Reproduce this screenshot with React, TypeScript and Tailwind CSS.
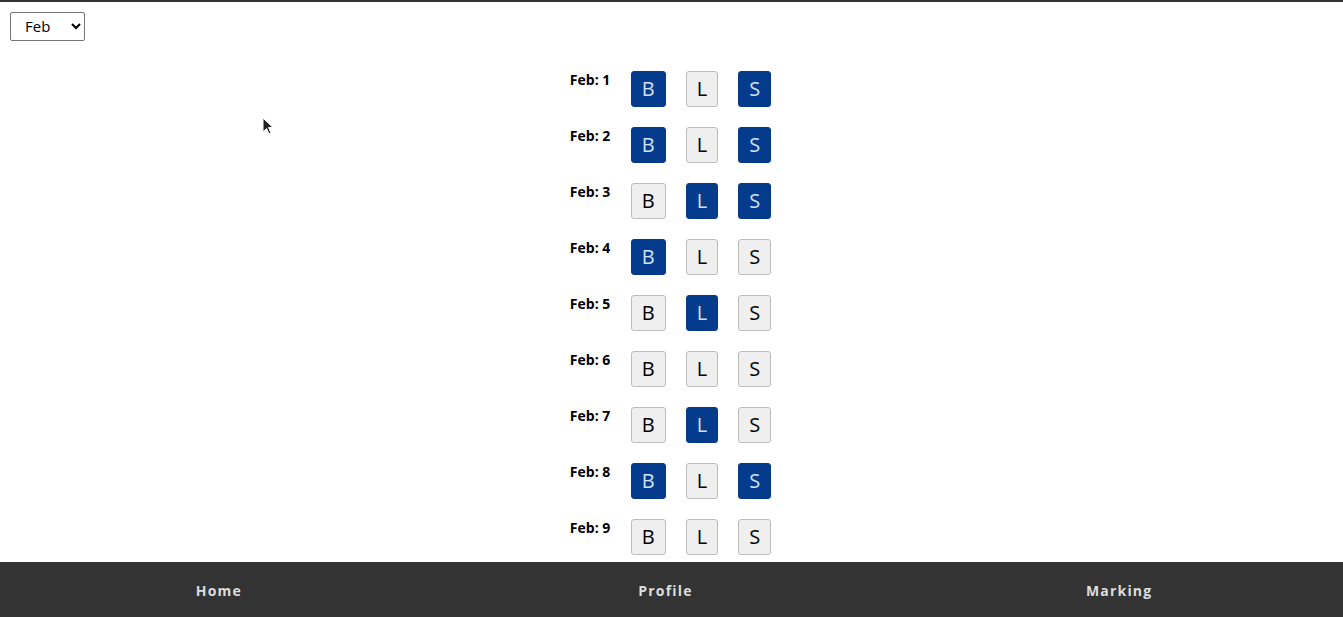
import { useState } from 'react'

const marks: Record<number, string[]> = {
  1: ['B', 'S'],
  2: ['B', 'S'],
  3: ['L', 'S'],
  4: ['B'],
  5: ['L'],
  6: [],
  7: ['L'],
  8: ['B', 'S'],
  9: [],
}

const days = Array.from({ length: 9 }, (_, i) => i + 1)

function MealButton({ letter, active }: { letter: string; active: boolean }) {
  return (
    <button
      className={
        active
          ? 'h-9 px-[10px] rounded-[3px] border border-[#063a88] bg-[#043b8c] text-[#d3e2f6] text-[20px] leading-none'
          : 'h-9 px-[10px] rounded-[3px] border border-[#bdbdbd] bg-[#efefef] text-black text-[20px] leading-none'
      }
    >
      {letter}
    </button>
  )
}

export default function App() {
  const [month, setMonth] = useState('Feb')

  return (
    <div className="h-screen flex flex-col bg-white border-t-2 border-[#333] font-['Open_Sans',sans-serif] relative">
      <div className="flex-1 overflow-hidden">
        <div className="pt-[10px] pl-[10px]">
          <select
            value={month}
            onChange={(e) => setMonth(e.target.value)}
            className="w-[75px] h-[29px] border border-[#767676] rounded-[2px] bg-white text-[15px] pl-[10px] pb-[2px] text-black"
          >
            <option>Jan</option>
            <option>Feb</option>
            <option>Mar</option>
          </select>
        </div>

        <div className="flex flex-col items-center pt-[30px] pr-[2px] gap-5">
          {days.map((d) => (
            <div key={d} className="flex items-start gap-5">
              <span className="text-[14px] font-bold leading-5 mt-[-1px] w-[41px]">
                Feb: {d}
              </span>
              {['B', 'L', 'S'].map((l) => (
                <MealButton key={l} letter={l} active={(marks[d] || []).includes(l)} />
              ))}
            </div>
          ))}
        </div>
      </div>

      <svg className="absolute left-[262px] top-[115px]" width="12" height="19" viewBox="0 0 12 19">
        <path d="M1 1 L1 15 L4.5 11.5 L7 17 L9 16 L6.5 10.5 L11 10.5 Z" fill="#222" stroke="#fff" strokeWidth="1" />
      </svg>

      <nav className="h-[55px] shrink-0 bg-[#333] grid grid-cols-3 items-center text-center pt-[2px]">
        <span className="text-[14px] font-bold tracking-[1.2px] text-[#ddd] pr-[10px]">Home</span>
        <span className="text-[14px] font-bold tracking-[1.2px] text-[#ddd] pr-[12px]">Profile</span>
        <span className="text-[14px] font-bold tracking-[1.2px] text-[#ddd]">Marking</span>
      </nav>
    </div>
  )
}
